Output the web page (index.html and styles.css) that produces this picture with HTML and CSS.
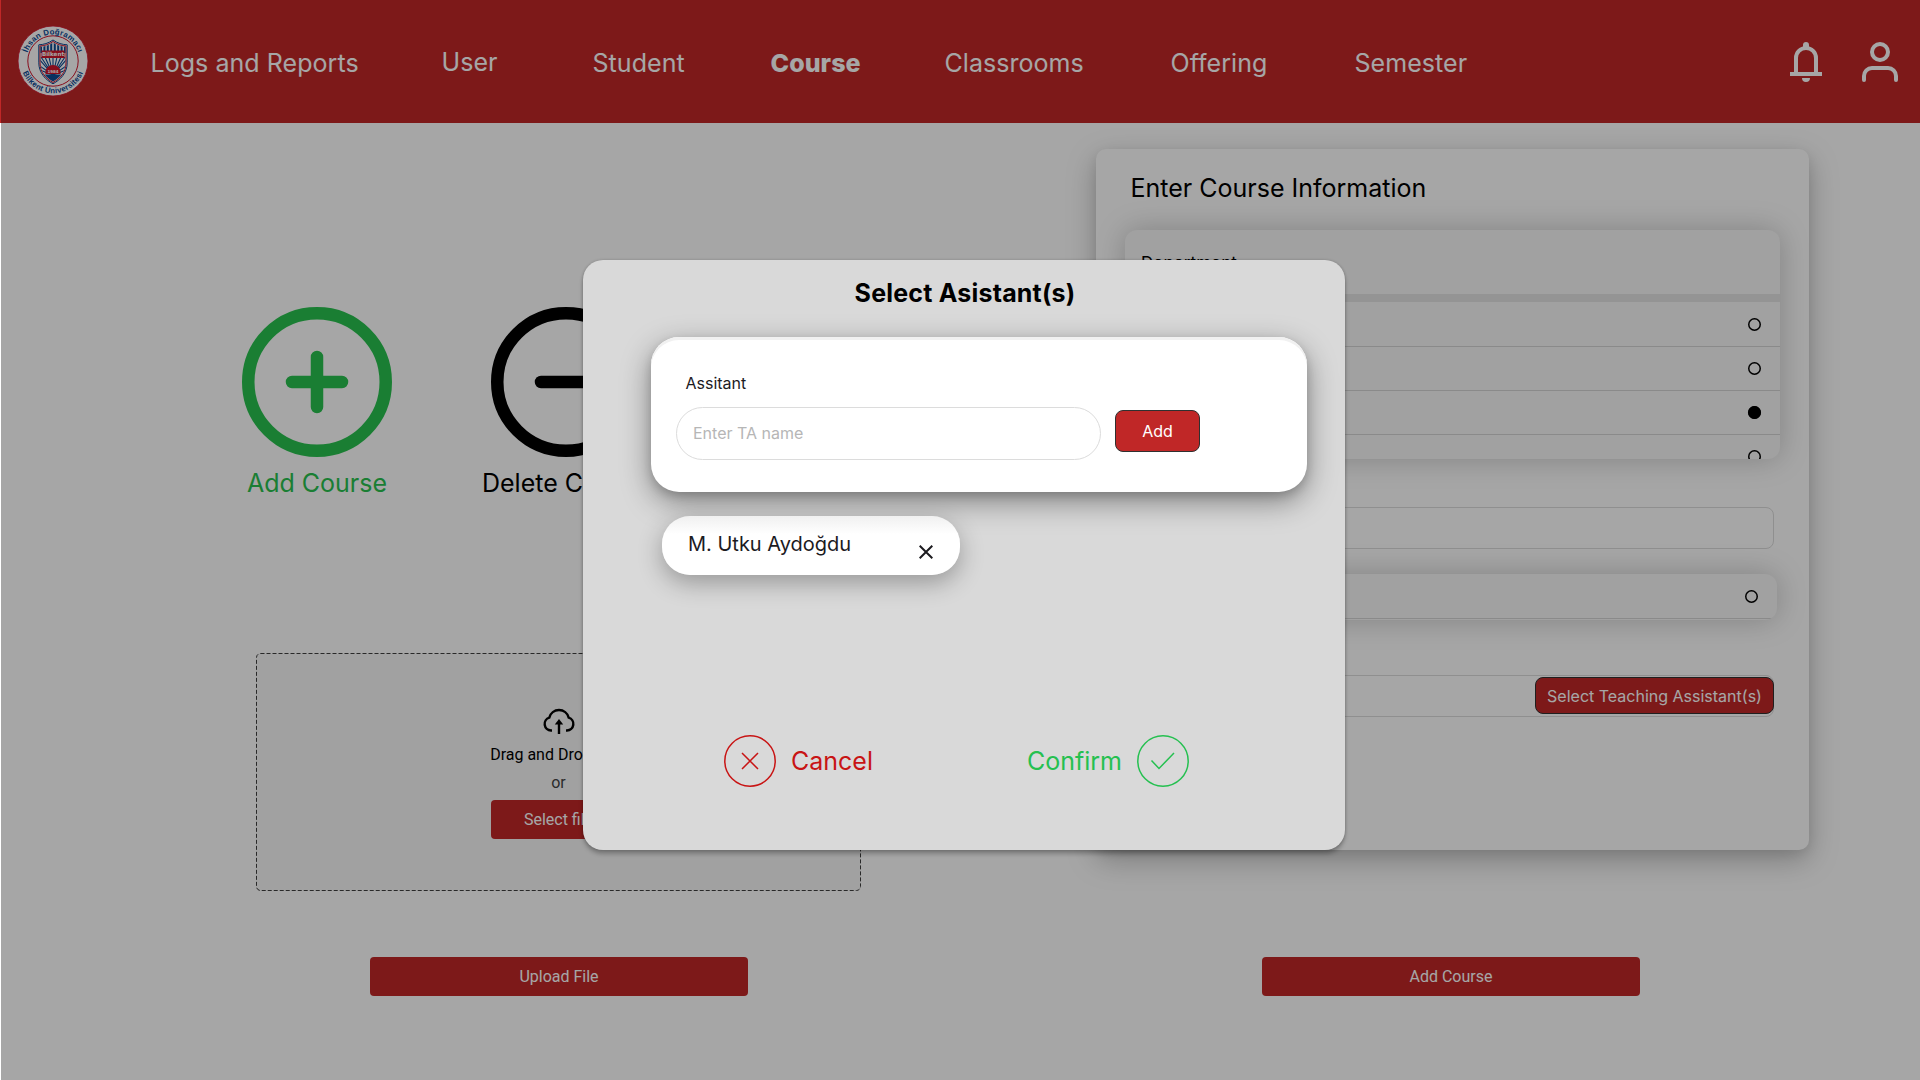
FILE: index.html
```html
<!DOCTYPE html>
<html lang="en">
<head>
<meta charset="utf-8">
<title>Course Management</title>
<link rel="stylesheet" href="styles.css">
</head>
<body>
<header class="topbar">
  <svg class="logo" viewBox="0 0 72 72" aria-label="Bilkent">
    <defs>
      <path id="arcTop" d="M9.300 36a26.700 26.700 0 0 1 53.400 0"/>
      <path id="arcBottom" d="M3.800 36a32.200 32.200 0 0 0 64.400 0"/>
      <clipPath id="shieldClip"><path d="M36 17.500c4 3 8.500 4 12.500 4.200v16c0 9-6 15-12.500 18.800c-6.500-3.800-12.500-9.800-12.500-18.800v-16c4-.2 8.500-1.200 12.500-4.200z"/></clipPath>
    </defs>
    <circle cx="36" cy="36" r="35" fill="#fff" stroke="#d0142c" stroke-width=".8"/>
    <circle cx="36" cy="36" r="25.200" fill="none" stroke="#d0142c" stroke-width="1"/>
    <path d="M36 15c4.500 3.300 9.500 4.600 14.200 4.800v18c0 10-6.700 17-14.200 21c-7.500-4-14.200-11-14.200-21v-18c4.700-.2 9.700-1.500 14.200-4.800z" fill="#fff" stroke="#0b4a94" stroke-width="1"/>
    <path d="M36 16.500c4 3 9 4.300 13 4.500v17c0 9.500-6.300 15.800-13 19.500c-6.700-3.700-13-10-13-19.500v-17c4-.2 9-1.500 13-4.500z" fill="#fff" stroke="#d0142c" stroke-width="1"/>
    <g clip-path="url(#shieldClip)">
      <path d="M24 16v12M27.400 16v12M30.800 16v12M34.200 16v12M37.800 16v12M41.200 16v12M44.600 16v12M48 16v12" stroke="#0b4a94" stroke-width="2"/>
      <path d="M36 50L22 34M36 50L24 32M36 50L28 32M36 50L32 32M36 50V32M36 50L40 32M36 50L44 32M36 50L48 32M36 50L50 34M36 50L20 39M36 50L52 39M36 50L20 44M36 50L52 44" stroke="#0b4a94" stroke-width="1.100"/>
      <path d="M20 49.500h32v12h-32z" fill="#0b4a94"/>
      <path d="M28.500 49v-2.500a7.500 6.500 0 0 1 15 0v2.500z" fill="#d0142c"/>
    </g>
    <path d="M24.500 25.500h23v7.500h-23z" fill="#d0142c"/>
    <text x="36" y="31.200" class="logo-name">Bilkent</text>
    <text x="36" y="47.500" class="logo-year">1984</text>
    <text class="logo-ring"><textPath href="#arcTop" startOffset="50%">İhsan Doğramacı</textPath></text>
    <text class="logo-ring"><textPath href="#arcBottom" startOffset="50%">Bilkent Üniversitesi</textPath></text>
  </svg>
  <nav class="nav">
    <a>Logs and Reports</a>
    <a class="raised">User</a>
    <a>Student</a>
    <a class="active">Course</a>
    <a>Classrooms</a>
    <a>Offering</a>
    <a>Semester</a>
  </nav>
  <div class="actions">
    <svg class="bell" width="32" height="40" viewBox="0 0 32 40">
      <path d="M6 31V16a10 10 0 0 1 20 0v15" fill="none" stroke="#fff" stroke-width="4"/>
      <path d="M0 30h32v4H0zM12 36h8a4 4 0 0 1-8 0zM13 5V3a3 3 0 0 1 6 0v2z" fill="#fff"/>
    </svg>
    <svg width="36" height="40" viewBox="0 0 36 40" fill="none" stroke="#fff" stroke-width="4">
      <circle cx="18" cy="10" r="8"/>
      <path d="M2 38v-4a8 8 0 0 1 8-8h16a8 8 0 0 1 8 8v4" stroke-linecap="round"/>
    </svg>
  </div>
</header>

<main class="page">
  <section class="left">
    <div class="modes">
      <div class="mode add">
        <svg width="150" height="150" viewBox="0 0 24 24"><circle cx="12" cy="12" r="11"/><path d="M12 8v8M8 12h8"/></svg>
        <span>Add Course</span>
      </div>
      <div class="mode">
        <svg width="150" height="150" viewBox="0 0 24 24"><circle cx="12" cy="12" r="11"/><path d="M8 12h8"/></svg>
        <span>Delete Course</span>
      </div>
    </div>
    <div class="dropzone">
      <svg class="outline" width="605" height="238"><rect x=".5" y=".5" width="604" height="237" rx="4"/></svg>
      <svg class="cloud" width="32" height="26" viewBox="0 0 32 26">
        <path d="M9 22.500H8A6.600 6.600 0 0 1 6.300 9.600A10 10 0 0 1 25.700 9.600A6.600 6.600 0 0 1 24 22.500h-1" fill="none" stroke="#000" stroke-width="2.400"/>
        <path d="M16 26V14" stroke="#000" stroke-width="2.400"/>
        <path d="M16 11l4.200 5.500h-8.400z"/>
      </svg>
      <p class="drop-title">Drag and Drop here</p>
      <p class="drop-or">or</p>
      <button class="btn select">Select file</button>
    </div>
    <button class="btn wide">Upload File</button>
  </section>

  <section class="right">
    <div class="panel">
      <h2>Enter Course Information</h2>
      <div class="options">
        <div class="options-head">Department</div>
        <div class="option"><i class="radio"></i></div>
        <div class="option"><i class="radio"></i></div>
        <div class="option"><i class="radio on"></i></div>
        <div class="option"><i class="radio"></i></div>
      </div>
      <div class="field"></div>
      <div class="options single"><div class="option"><i class="radio"></i></div></div>
      <div class="field assistants"><button class="btn outlined">Select Teaching Assistant(s)</button></div>
    </div>
    <button class="btn wide">Add Course</button>
  </section>
</main>

<div class="backdrop"></div>

<div class="modal">
  <h1>Select Asistant(s)</h1>
  <div class="search">
    <label>Assitant</label>
    <div class="search-row">
      <div class="input">Enter TA name</div>
      <button class="btn outlined add-btn">Add</button>
    </div>
  </div>
  <div class="chip">
    <span>M. Utku Aydoğdu</span>
    <svg width="14" height="14" viewBox="0 0 14 14"><path d="M.7.700l12.600 12.600M13.300.700L.7 13.300" stroke="#1c1b1f" stroke-width="2"/></svg>
  </div>
  <div class="choices">
    <div class="choice cancel">
      <svg width="52" height="52" viewBox="0 0 52 52"><circle cx="26" cy="26" r="25.200"/><path d="M18 18l16 16M34 18L18 34"/></svg>
      <span>Cancel</span>
    </div>
    <div class="choice confirm">
      <span>Confirm</span>
      <svg width="52" height="52" viewBox="0 0 52 52"><circle cx="26" cy="26" r="25.200"/><path d="M14.500 25.500l7.500 8L37 18"/></svg>
    </div>
  </div>
</div>
</body>
</html>
```
FILE: styles.css
```css
* { box-sizing: border-box; margin: 0; padding: 0; }

body {
  width: 1920px;
  height: 1080px;
  overflow: hidden;
  position: relative;
  background: #fff;
  color: #000;
  font-family: Inter, "Noto Sans", sans-serif;
  font-size: 25px;
  line-height: 30px;
}

button { border: 0; font: inherit; color: inherit; }

.topbar {
  display: flex;
  align-items: flex-start;
  height: 123px;
  background: #c02727;
  color: #fff;
}
.logo { width: 72px; height: 72px; margin: 25px 0 0 16.500px; }
.logo-ring { font: 700 7.800px "Liberation Sans", sans-serif; letter-spacing: .25px; fill: #0b4a94; text-anchor: middle; }
.logo-name { font: 700 5.600px "DejaVu Sans", sans-serif; fill: #fff; text-anchor: middle; }
.logo-year { font: 700 4px "DejaVu Sans", sans-serif; fill: #fff; text-anchor: middle; }

.nav {
  display: grid;
  grid-template-columns: 291px 151px 177px 175px 226px 184px 150px;
  margin: 48px 0 0 62px;
  letter-spacing: .05px;
}
.nav a { white-space: nowrap; }
.nav .raised { margin-top: -1px; }
.nav .active { padding-left: 1px; font-weight: 800; }

.actions { display: flex; gap: 40px; margin: 42px 22px 0 auto; }

.page { display: grid; grid-template-columns: 1096px 713px; }

.left { padding: 184px 0 0 242px; }
.modes { display: flex; gap: 99px; }
.mode { width: 150px; display: flex; flex-direction: column; align-items: center; gap: 11px; white-space: nowrap; }
.mode svg { fill: none; stroke: currentColor; stroke-width: 2; stroke-linecap: round; }
.mode.add { color: #29c24f; }

.dropzone {
  position: relative;
  display: flex;
  flex-direction: column;
  align-items: center;
  width: 605px;
  height: 238px;
  margin: 155px 0 0 14px;
  padding-top: 55px;
  border-radius: 4px;
  background: #f7f7f7;
  font: 16px/24px Roboto, sans-serif;
}
.outline { position: absolute; inset: 0; fill: none; stroke: #404040; stroke-dasharray: 4 2; }
.drop-title { margin-top: 9px; }
.drop-or { margin-top: 4px; color: #444; }

.btn {
  display: flex;
  align-items: center;
  justify-content: center;
  border-radius: 4px;
  background: #c02727;
  color: #fff;
  font: 16px/24px Roboto, sans-serif;
}
.select { width: 135px; height: 39px; margin-top: 5px; }
.wide { width: 378px; height: 39px; }
.left .wide { margin: 66px 0 0 128px; }
.right .wide { margin: 107px 0 0 166px; }

.right { padding-top: 26px; }
.panel {
  height: 701px;
  padding: 24px 29px 0;
  border-radius: 10px;
  background: #fff;
  box-shadow: 0 10px 30px rgba(0, 0, 0, .25), 0 4px 12px rgba(0, 0, 0, .08);
}
.panel h2 { padding-left: 5.500px; font-size: 25px; font-weight: 400; }

.options {
  width: 655px;
  height: 229px;
  margin-top: 27px;
  border-radius: 12px;
  overflow: hidden;
  background: #f7f7f7;
  box-shadow: 0 0 30px rgba(0, 0, 0, .22);
}
.options-head {
  height: 72px;
  padding: 18.500px 16px 0;
  border-bottom: 8px solid #e4e4e4;
  font-size: 17px;
  letter-spacing: .1px;
  line-height: 28px;
}
.option {
  display: flex;
  align-items: center;
  justify-content: flex-end;
  height: 44px;
  padding-right: 19.500px;
  border-bottom: 1px solid #d4d4d4;
}
.options-head + .option { height: 45px; }
.radio { width: 13px; height: 13px; border-radius: 50%; box-shadow: inset 0 0 0 1.500px #000; }
.radio.on { background: #000; }
.single { width: 654px; height: 45.500px; margin: 25px 0 0 -2px; }
.single .option { height: 45px; }

.field {
  height: 42px;
  width: 649px;
  margin-top: 48px;
  border: 1px solid #dcdcdc;
  border-radius: 8px;
}
.assistants { display: flex; justify-content: flex-end; align-items: flex-start; margin-top: 55.500px; padding-top: 1px; }
.btn.outlined {
  border: 1px solid #303030;
  border-radius: 8px;
  font: 400 16px/24px Inter, sans-serif;
  flex: none;
}
.assistants .btn { width: 239px; height: 37px; margin-right: -1px; }

.backdrop { position: absolute; inset: 0 0 0 1px; background: rgba(0, 0, 0, .35); }

.modal {
  position: absolute;
  left: 583px;
  top: 260px;
  width: 762px;
  height: 590px;
  padding-top: 18px;
  border-radius: 20px;
  background: #d9d9d9;
  box-shadow: 0 4px 4px rgba(0, 0, 0, .25), 0 0 3px rgba(0, 0, 0, .2);
}
.modal h1 { padding-left: 2px; font-size: 25px; font-weight: 700; letter-spacing: .2px; text-align: center; }

.search {
  width: 656px;
  height: 155px;
  margin: 29px 0 0 68px;
  padding: 34px 25px 0;
  border-radius: 28px;
  background: #fff;
  box-shadow: inset 0 3px 0 #f1f1f1, 0 10px 30px rgba(0, 0, 0, .4), 0 4px 10px rgba(0, 0, 0, .15);
  font-size: 16px;
  line-height: 24px;
}
.search label { display: block; padding-left: 9.500px; color: #1c1b1f; }
.search-row { display: flex; align-items: flex-start; gap: 14px; margin-top: 12px; }
.input {
  width: 425px;
  height: 53px;
  padding: 13px 16px;
  border: 1px solid #dcdcdc;
  border-radius: 27px;
  color: #b6b6b6;
}
.add-btn { width: 85px; height: 42px; margin-top: 3px; }

.chip {
  display: flex;
  justify-content: space-between;
  width: 298px;
  height: 58.500px;
  margin: 24px 0 0 79px;
  padding: 13px 27px 0 26px;
  border-radius: 28px;
  background: linear-gradient(#f0f0f0, #fff 18px);
  box-shadow: 0 8px 25px rgba(0, 0, 0, .3);
  color: #1c1b1f;
  font-size: 20px;
}
.chip svg { margin-top: 16px; }

.choices { display: flex; justify-content: space-between; margin: 160.500px 156px 0 141px; }
.choice { display: flex; align-items: center; gap: 15px; }
.choice svg { fill: none; stroke: currentColor; stroke-width: 1.500; }
.cancel { color: #c81414; }
.confirm { color: #25c050; }
```
